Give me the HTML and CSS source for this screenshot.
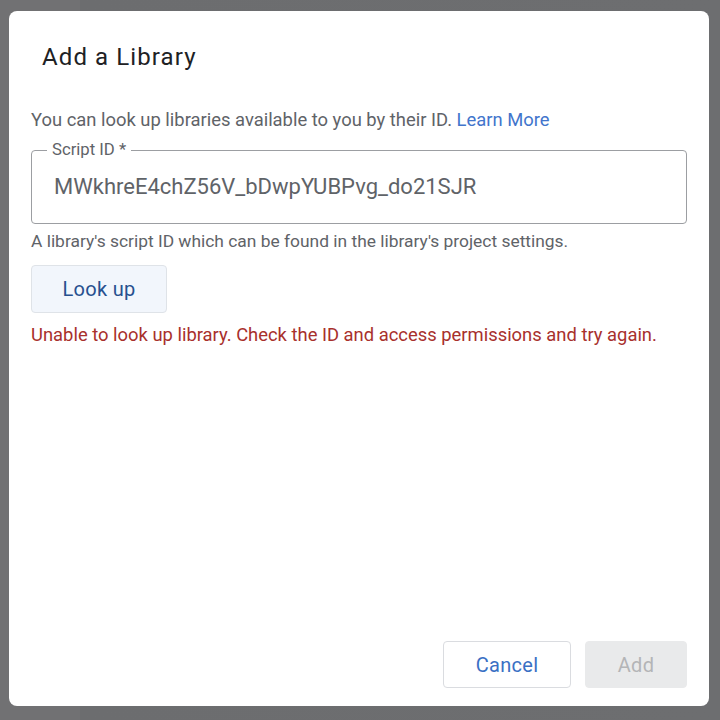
FILE: index.html
```html
<!DOCTYPE html>
<html lang="en">
<head>
<meta charset="utf-8">
<title>Add a Library</title>
<link rel="stylesheet" href="styles.css">
</head>
<body>
<div class="dialog" role="dialog" aria-labelledby="dlg-title">
  <h1 class="title" id="dlg-title">Add a Library</h1>
  <p class="desc">You can look up libraries available to you by their ID. <a class="link" href="#">Learn More</a></p>
  <fieldset class="field">
    <legend class="field-label">Script ID *</legend>
    <div class="field-value">MWkhreE4chZ56V_bDwpYUBPvg_do21SJR</div>
  </fieldset>
  <p class="helper">A library's script ID which can be found in the library's project settings.</p>
  <button class="btn-lookup" type="button">Look up</button>
  <p class="error">Unable to look up library. Check the ID and access permissions and try again.</p>
  <div class="actions">
    <button class="btn-cancel" type="button">Cancel</button>
    <button class="btn-add" type="button" disabled>Add</button>
  </div>
</div>
</body>
</html>
```
FILE: styles.css
```css
html, body {
  height: 100%;
}
body {
  margin: 0;
  background: linear-gradient(to right, #717173 0, #717173 80px, #6c6d6f 80px, #6d6e70 100%);
  font-family: Roboto, "Liberation Sans", Arial, sans-serif;
  box-sizing: border-box;
  padding: 11px 11px 14px 9px;
}
.dialog {
  box-sizing: border-box;
  height: 695px;
  background: #ffffff;
  border-radius: 8px;
  display: flex;
  flex-direction: column;
  align-items: flex-start;
  padding: 0 22px 18px 22px;
}
.title {
  margin: 31px 0 0 11px;
  font-size: 24px;
  line-height: 30px;
  font-weight: 400;
  color: #202124;
  letter-spacing: 1.1px;
}
.desc {
  margin: 37px 0 0 0;
  font-size: 18.4px;
  line-height: 22px;
  color: #5f6368;
}
.link {
  color: #4275cc;
  text-decoration: none;
}
.field {
  box-sizing: border-box;
  align-self: stretch;
  margin: 9px 0 0 0;
  padding: 0;
  height: 84px;
  border: 1px solid #9c9ea2;
  border-radius: 4px;
  min-width: 0;
}
.field-label {
  margin-left: 15px;
  padding: 0 5px;
  font-size: 16.7px;
  line-height: 20px;
  color: #5f6368;
}
.field-value {
  margin: 13px 0 0 22px;
  font-size: 22px;
  line-height: 28px;
  color: #5f6368;
}
.helper {
  margin: 7px 0 0 0;
  font-size: 17.4px;
  line-height: 20px;
  color: #5f6368;
}
.btn-lookup {
  margin-top: 14px;
  width: 136px;
  height: 48px;
  background: #f2f6fc;
  border: 1px solid #dfe3e8;
  border-radius: 4px;
  color: #27508f;
  font-family: inherit;
  font-size: 20px;
  font-weight: 400;
  letter-spacing: 0.3px;
  padding: 0;
}
.error {
  margin: 11px 0 0 0;
  font-size: 18.4px;
  line-height: 22px;
  color: #a8302c;
}
.actions {
  margin-top: auto;
  align-self: stretch;
  display: flex;
  justify-content: flex-end;
  gap: 14px;
}
.btn-cancel, .btn-add {
  height: 47px;
  border-radius: 4px;
  font-family: inherit;
  font-size: 20px;
  font-weight: 400;
  letter-spacing: 0.3px;
  padding: 0;
}
.btn-cancel {
  width: 128px;
  background: #ffffff;
  border: 1px solid #dadce0;
  color: #3a70c4;
}
.btn-add {
  width: 102px;
  background: #e9eaeb;
  border: 1px solid #e9eaeb;
  color: #b4b5b7;
}
```
